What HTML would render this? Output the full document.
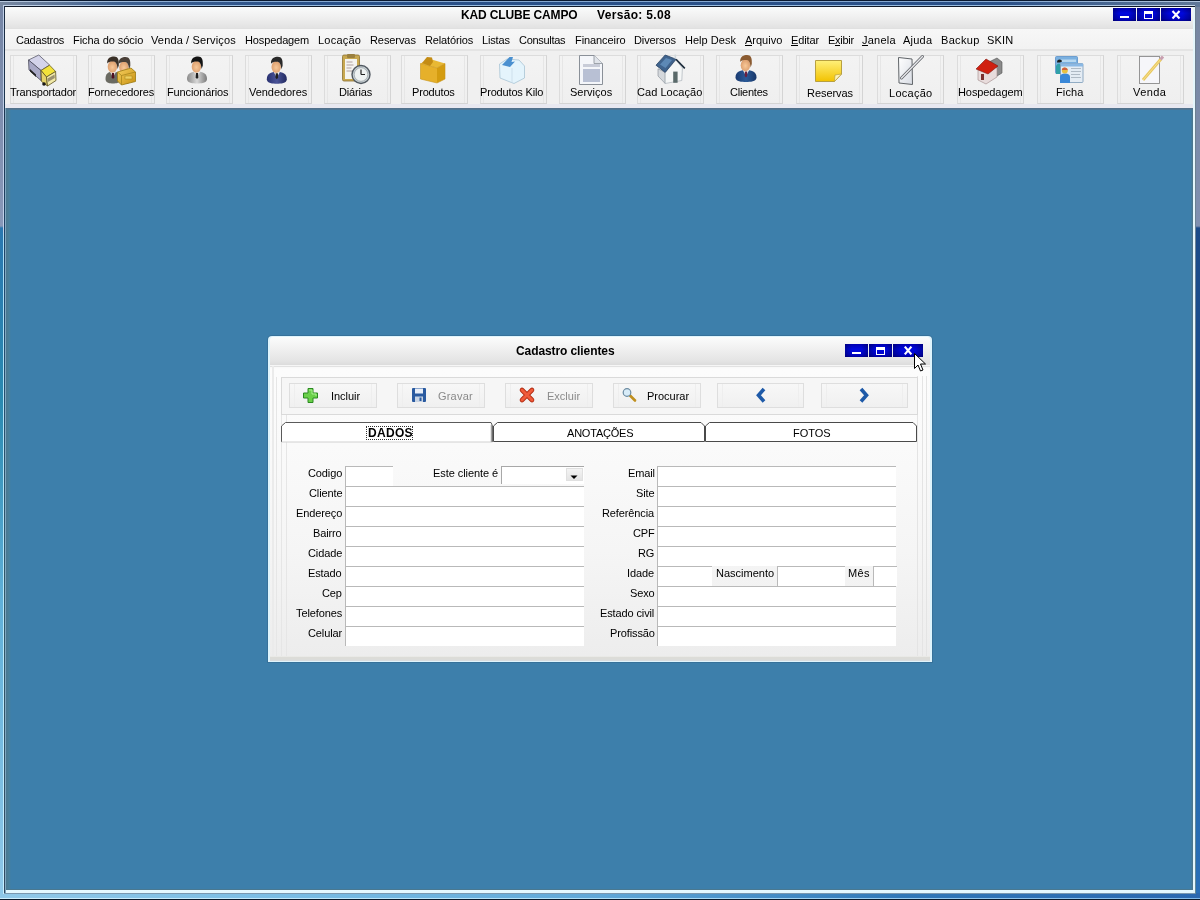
<!DOCTYPE html>
<html><head><meta charset="utf-8">
<style>
*{box-sizing:border-box;margin:0;padding:0}
html,body{width:1200px;height:900px;overflow:hidden;background:#3d7fab}
body{position:relative;font-family:"Liberation Sans",sans-serif;font-size:11px;color:#000}
.a{position:absolute}
.t{position:absolute;white-space:nowrap;will-change:transform}
u{text-decoration:none;border-bottom:1px solid #000;display:inline-block;line-height:10px}
.tb{position:absolute;top:55px;width:67px;height:49px;border:1px solid #dcdcdc;border-right-color:#d4d4d4;border-bottom-color:#d4d4d4;background:linear-gradient(180deg,#f3f3f3,#efefef)}
.tb:before{content:"";position:absolute;left:2px;top:0;width:1px;bottom:0;background:#e6e6e6}
.tb:after{content:"";position:absolute;right:2px;top:0;width:1px;bottom:0;background:#e6e6e6}
.ic{position:absolute;top:55px;width:32px;height:32px}
.db{position:absolute;top:383px;height:25px;border:1px solid #dedede;background:linear-gradient(180deg,#f7f7f7,#f0f0f0)}
.db:before{content:"";position:absolute;left:4px;top:0;width:1px;bottom:0;background:#eeeeee}
.db:after{content:"";position:absolute;right:4px;top:0;width:1px;bottom:0;background:#eeeeee}
.fld{position:absolute;background:#fff;border-top:1px solid #b9b9b9;border-left:1px solid #b9b9b9;height:20px}
.wb{position:absolute;background:linear-gradient(90deg,rgba(0,0,40,.35),rgba(0,0,0,0) 30%,rgba(0,0,0,0) 70%,rgba(0,0,40,.35)),linear-gradient(180deg,#0000b0,#0008e0 40%,#0004c8 80%,#00009a)}
</style></head><body>
<div class="a" style="left:0;top:0;width:1200px;height:900px;background:#3d7fab"></div>
<div class="a" style="left:0;top:0;width:4px;height:900px;background:linear-gradient(180deg,#7585a5 0,#8898b8 226px,#2a78b0 228px,#2a8ab0 400px,#60b0d8 600px,#90c8e8 900px)"></div>
<div class="a" style="left:1195px;top:0;width:5px;height:900px;background:linear-gradient(180deg,#7585a0 0,#8090b0 226px,#1a4a88 228px,#1a5090 400px,#2060a0 600px,#2a70b8 900px)"></div>
<div class="a" style="left:0;top:893px;width:1200px;height:7px;background:linear-gradient(90deg,#90c8e8 0,#78bce4 300px,#60a8d8 600px,#3078b8 900px,#2a68b0 1200px)"></div>
<div class="a" style="left:0;top:0;width:1200px;height:7px;background:linear-gradient(90deg,#7888a0 0,#3e6090 120px,#2a5088 300px,#2a5088 1000px,#607898 1200px)"></div>
<div class="a" style="left:0;top:0;width:1200px;height:1px;background:#0b1a30"></div>
<div class="a" style="left:0;top:1px;width:1200px;height:1px;background:linear-gradient(90deg,#b8c8dc,#86a8d0 200px,#86a8d0 1000px,#b0c4dc)"></div>
<div class="a" style="left:3px;top:5px;width:1192px;height:1px;background:linear-gradient(90deg,#c4d4e8,#98bce0 200px,#98bce0 1000px,#c4d4e8)"></div>
<div class="a" style="left:3px;top:5px;width:1px;height:889px;background:linear-gradient(180deg,#c0d0e8,#c0d0e8 226px,#a8dcf4 232px,#b8e8f8 600px,#c8f0ff)"></div>
<div class="a" style="left:4px;top:6px;width:1191px;height:1px;background:#101828"></div>
<div class="a" style="left:4px;top:6px;width:1px;height:888px;background:linear-gradient(180deg,#1a2a40,#1f4a70 300px,#305868 600px,#304860)"></div>
<div class="a" style="left:1195px;top:6px;width:1px;height:888px;background:linear-gradient(180deg,#708090,#608898)"></div>
<div class="a" style="left:0;top:898px;width:1200px;height:1px;background:linear-gradient(90deg,#d0f0ff,#b0e0f8 600px,#80b8e8)"></div>
<div class="a" style="left:0;top:899px;width:1200px;height:1px;background:#0a1a2a"></div>
<div class="a" style="left:4px;top:893px;width:1191px;height:1px;background:#7a98b0"></div>
<div class="a" style="left:5px;top:7px;width:1190px;height:101px;background:#f0f0f0"></div>
<div class="a" style="left:5px;top:7px;width:1188px;height:22px;background:linear-gradient(180deg,#fafbfb 0,#f0f0f0 10px,#e2e2e2 21px,#dedede 22px)"></div>
<div class="a" style="left:5px;top:29px;width:1188px;height:20px;background:linear-gradient(180deg,#f7f7f7,#f2f2f2)"></div>
<div class="a" style="left:5px;top:49px;width:1188px;height:2px;background:#e4e4e4"></div>
<div class="a" style="left:5px;top:51px;width:1188px;height:53px;background:#f0f0f0"></div>
<div class="a" style="left:5px;top:104px;width:1188px;height:4px;background:#e8e8f0"></div>
<div class="a" style="left:1193px;top:7px;width:2px;height:886px;background:#e4f6fc"></div>
<div class="wb" style="left:1113px;top:8px;width:23px;height:13px"></div>
<div class="wb" style="left:1137px;top:8px;width:23px;height:13px"></div>
<div class="wb" style="left:1161px;top:8px;width:30px;height:13px"></div>
<div class="a" style="left:1120px;top:16px;width:9px;height:2px;background:#fff"></div>
<div class="a" style="left:1144px;top:11px;width:9px;height:8px;border:1px solid #fff;border-top-width:3px"></div>
<svg class="a" style="left:1170px;top:10px" width="12" height="10"><path d="M2.5 1 L9.5 8.5 M9.5 1 L2.5 8.5" stroke="#fff" stroke-width="2.1"/></svg>
<div class="tb" style="left:10px"></div>
<div class="tb" style="left:88px"></div>
<div class="tb" style="left:166px"></div>
<div class="tb" style="left:245px"></div>
<div class="tb" style="left:324px"></div>
<div class="tb" style="left:401px"></div>
<div class="tb" style="left:480px"></div>
<div class="tb" style="left:559px"></div>
<div class="tb" style="left:637px"></div>
<div class="tb" style="left:716px"></div>
<div class="tb" style="left:796px"></div>
<div class="tb" style="left:877px"></div>
<div class="tb" style="left:957px"></div>
<div class="tb" style="left:1037px"></div>
<div class="tb" style="left:1117px"></div>
<div class="a" style="left:5px;top:108px;width:1188px;height:785px;background:#e4f8ff"></div>
<div class="a" style="left:5px;top:108px;width:1px;height:785px;background:#80a8c0"></div>
<div class="a" style="left:6px;top:108px;width:1187px;height:782px;background:linear-gradient(90deg,#4a7890 0,#48809c 3px,#3d7fab 5px,#3d7fab 1185px,#4a7890 1186px)"></div>
<div class="a" style="left:6px;top:108px;width:1187px;height:2px;background:linear-gradient(180deg,#566f88,#4a7898)"></div>
<div class="a" style="left:6px;top:889px;width:1187px;height:1px;background:#4a7890"></div>
<div class="a" style="left:267px;top:335px;width:666px;height:328px;border-radius:5px 5px 0 0;background:#2a5a7a;opacity:.35"></div>
<div class="a" style="left:268px;top:336px;width:664px;height:326px;border-radius:4px 4px 0 0;background:#dff4fc"></div>
<div class="a" style="left:270px;top:337px;width:660px;height:28px;border-radius:3px 3px 0 0;background:linear-gradient(180deg,#fbfcfc 0,#f2f2f2 10px,#e4e4e4 24px,#dcdcdc 28px)"></div>
<div class="a" style="left:270px;top:365px;width:660px;height:292px;background:linear-gradient(180deg,#f6f6f6 0,#fcfcfc 3px,#fafafa 80px,#f5f5f5 185px,#ededed 290px);border-top:1px solid #f6f6f6;box-shadow:inset 0 1px 0 #e2e2e2"></div>
<div class="a" style="left:270px;top:656px;width:660px;height:5px;background:linear-gradient(180deg,#f0f0ee,#dcdcd8 1.5px,#dcdcd8 3px,#d8dce0)"></div>
<div class="a" style="left:272px;top:366px;width:2px;height:290px;background:#ebebeb"></div>
<div class="a" style="left:276px;top:377px;width:1px;height:279px;background:#e6e6e6"></div>
<div class="a" style="left:281px;top:377px;width:1px;height:279px;background:#e6e6e6"></div>
<div class="a" style="left:286px;top:377px;width:1px;height:279px;background:#e6e6e6"></div>
<div class="a" style="left:917px;top:376px;width:1px;height:280px;background:#e4e4e4"></div>
<div class="a" style="left:922px;top:376px;width:1px;height:280px;background:#e4e4e4"></div>
<div class="a" style="left:926px;top:376px;width:1px;height:280px;background:#e4e4e4"></div>
<div class="wb" style="left:845px;top:344px;width:23px;height:13px"></div>
<div class="wb" style="left:869px;top:344px;width:23px;height:13px"></div>
<div class="wb" style="left:893px;top:344px;width:30px;height:13px"></div>
<div class="a" style="left:852px;top:352px;width:9px;height:2px;background:#fff"></div>
<div class="a" style="left:876px;top:347px;width:9px;height:8px;border:1px solid #fff;border-top-width:3px"></div>
<svg class="a" style="left:902px;top:345px" width="12" height="11"><path d="M2.8 1.6 L9.4 9.4 M9.4 1.6 L2.8 9.4" stroke="#fff" stroke-width="2.2"/></svg>
<div class="a" style="left:281px;top:377px;width:637px;height:38px;border:1px solid #dadada;background:#f6f6f6"></div>
<div class="db" style="left:289px;width:88px"></div>
<div class="db" style="left:397px;width:88px"></div>
<div class="db" style="left:505px;width:88px"></div>
<div class="db" style="left:613px;width:88px"></div>
<div class="db" style="left:717px;width:87px"></div>
<div class="db" style="left:821px;width:87px"></div>
<svg class="a" style="left:280px;top:421px" width="640" height="24"><path d="M1.5 21 L1.5 5 L5.5 1.5 L211 1.5 L212.5 5 L212.5 21" fill="#fff" stroke="#5a5a5a" stroke-width="1"/><path d="M213.5 20.5 L213.5 5 L217.5 1.5 L421 1.5 L424.5 5 L424.5 20.5 Z" fill="#fff" stroke="#4a4a4a" stroke-width="1"/><path d="M425.5 20.5 L425.5 5 L429.5 1.5 L633 1.5 L636.5 5 L636.5 20.5 Z" fill="#fff" stroke="#4a4a4a" stroke-width="1"/><path d="M1.5 21 L212.5 21" stroke="#d0d0d0" stroke-width="1"/><path d="M211.5 4 L211.5 21" stroke="#a0a0a0" stroke-width="1.5"/></svg>
<div class="a" style="left:366px;top:426px;width:47px;height:14px;border:1px dotted #333"></div>
<div class="fld" style="left:345px;top:466px;width:48px"></div>
<div class="fld" style="left:657px;top:466px;width:239px"></div>
<div class="fld" style="left:345px;top:486px;width:239px"></div>
<div class="fld" style="left:657px;top:486px;width:239px"></div>
<div class="fld" style="left:345px;top:506px;width:239px"></div>
<div class="fld" style="left:657px;top:506px;width:239px"></div>
<div class="fld" style="left:345px;top:526px;width:239px"></div>
<div class="fld" style="left:657px;top:526px;width:239px"></div>
<div class="fld" style="left:345px;top:546px;width:239px"></div>
<div class="fld" style="left:657px;top:546px;width:239px"></div>
<div class="fld" style="left:345px;top:566px;width:239px"></div>
<div class="fld" style="left:657px;top:566px;width:55px"></div>
<div class="fld" style="left:777px;top:566px;width:68px"></div>
<div class="fld" style="left:873px;top:566px;width:24px"></div>
<div class="fld" style="left:345px;top:586px;width:239px"></div>
<div class="fld" style="left:657px;top:586px;width:239px"></div>
<div class="fld" style="left:345px;top:606px;width:239px"></div>
<div class="fld" style="left:657px;top:606px;width:239px"></div>
<div class="fld" style="left:345px;top:626px;width:239px"></div>
<div class="fld" style="left:657px;top:626px;width:239px"></div>
<div class="a" style="left:501px;top:466px;width:83px;height:18px;background:#fff;border-top:1px solid #a8a8a8;border-left:1px solid #a8a8a8"></div>
<div class="a" style="left:566px;top:468px;width:17px;height:13px;background:linear-gradient(180deg,#f4f4f4,#e4e4e4);border:1px solid #e0e0e0"></div>
<svg class="a" style="left:570px;top:475px" width="9" height="5"><path d="M0.5 0.5 L7.5 0.5 L4 4 Z" fill="#000"/></svg>
<svg class="a" style="left:0;top:0" width="1200" height="110" viewBox="0 0 1200 110">
<defs><linearGradient id="gy" x1="0" y1="0" x2="0" y2="1"><stop offset="0" stop-color="#fff07a"/><stop offset="1" stop-color="#f2c200"/></linearGradient><linearGradient id="gold" x1="0" y1="0" x2="1" y2="1"><stop offset="0" stop-color="#f6d060"/><stop offset="1" stop-color="#c89010"/></linearGradient><linearGradient id="grey" x1="0" y1="0" x2="1" y2="0"><stop offset="0" stop-color="#8a8a8a"/><stop offset=".5" stop-color="#d8d8d8"/><stop offset="1" stop-color="#7a7a7a"/></linearGradient><linearGradient id="navy" x1="0" y1="0" x2="1" y2="0"><stop offset="0" stop-color="#283070"/><stop offset=".5" stop-color="#4a5498"/><stop offset="1" stop-color="#222a60"/></linearGradient><linearGradient id="blu" x1="0" y1="0" x2="1" y2="0"><stop offset="0" stop-color="#1a3a70"/><stop offset=".5" stop-color="#2a5a98"/><stop offset="1" stop-color="#183668"/></linearGradient><radialGradient id="skin" cx=".5" cy=".55" r=".6"><stop offset="0" stop-color="#f8c898"/><stop offset="1" stop-color="#d89868"/></radialGradient><linearGradient id="paper" x1="0" y1="0" x2="1" y2="1"><stop offset="0" stop-color="#ffffff"/><stop offset="1" stop-color="#d8dce4"/></linearGradient></defs>
<g stroke-linejoin="round"><path d="M28.5 60 L38.8 55 L49.6 65 L41 70.5 Z" fill="#d4d4ea" stroke="#5a5a6a" stroke-width=".8"/><path d="M28.5 60 L41 70.5 L41 80.5 L29 70 Z" fill="#a9a9c6" stroke="#4a4a5a" stroke-width=".8"/><path d="M30 69 L36 74.5 L36 77 L30 71.5 Z" fill="#202020"/><path d="M41 70.5 L49.6 65.2 L55.6 71.5 L46.5 77 Z" fill="#f2e23a" stroke="#6a6020" stroke-width=".8"/><path d="M41 70.5 L46.5 77 L47.5 86 L41.5 81.5 Z" fill="#e6d36a" stroke="#5a5020" stroke-width=".8"/><path d="M46.5 77 L55.6 71.5 L56 80.5 L47.5 86 Z" fill="#f2eaa8" stroke="#5a5020" stroke-width=".8"/><path d="M47.5 78.5 L54.5 74.5 L54.8 78 L47.8 82 Z" fill="#9a9070"/><circle cx="44" cy="84" r="1.8" fill="#181818"/></g>
<path d="M105.5 79.0 C105.5 73.5 108.5 71.5 113 71.5 C117.5 71.5 120.5 73.5 120.5 79.0 C120.5 83.0 116.0 83.5 113 83.5 C110.0 83.5 105.5 83.0 105.5 79.0 Z" fill="#6a6a62"/><path d="M109.8 71.5 L113 77.5 L116.2 71.5 Z" fill="#eeeeee"/><path d="M111.9 73.0 L114.1 73.0 L114.3 77.5 L113 79.0 L111.7 77.5 Z" fill="#501020"/><ellipse cx="112.4" cy="66.7" rx="4.7" ry="6" fill="url(#skin)"/><path d="M107.2 63.5 C106.8 57.5 111 56.5 114 56.5 C118 56.5 119.2 59.5 118.8 65.5 L117.6 69.0 C117.2 64.0 116 61.5 113 61.5 C110 61.5 108.4 62.1 107.2 63.5 Z" fill="#3a3028"/>
<path d="M118.5 79.5 C118.5 74 120.9 72 124.5 72 C128.1 72 130.5 74 130.5 79.5 C130.5 83.5 126.9 84 124.5 84 C122.1 84 118.5 83.5 118.5 79.5 Z" fill="#7a7a6a"/><path d="M121.3 72 L124.5 78 L127.7 72 Z" fill="#eeeeee"/><path d="M123.4 73.5 L125.6 73.5 L125.8 78 L124.5 79.5 L123.2 78 Z" fill="#802030"/><ellipse cx="123.9" cy="67.2" rx="4.7" ry="6" fill="url(#skin)"/><path d="M118.7 64 C118.3 58 122.5 57 125.5 57 C129.5 57 130.7 60 130.3 66 L129.1 69.5 C128.7 64.5 127.5 62 124.5 62 C121.5 62 119.9 62.6 118.7 64 Z" fill="#4a4038"/>
<path d="M117.5 72 L131 68 L135.5 72 L135.5 81.5 L121.5 85 L117.5 81 Z" fill="url(#gold)" stroke="#9a7a10" stroke-width=".8"/><path d="M117.5 72 L121.5 75.5 L135.5 72 M121.5 75.5 L121.5 85" fill="none" stroke="#a08018" stroke-width=".7"/><rect x="125" y="76" width="7" height="3" fill="#f0d060" stroke="#a08018" stroke-width=".5"/>
<path d="M187.0 79.0 C187.0 73.5 191.0 71.5 197 71.5 C203.0 71.5 207.0 73.5 207.0 79.0 C207.0 83.0 201.0 83.5 197 83.5 C193.0 83.5 187.0 83.0 187.0 79.0 Z" fill="url(#grey)"/><path d="M193.8 71.5 L197 77.5 L200.2 71.5 Z" fill="#eeeeee"/><path d="M195.9 73.0 L198.1 73.0 L198.3 77.5 L197 79.0 L195.7 77.5 Z" fill="#202020"/><ellipse cx="196.4" cy="66.7" rx="4.7" ry="6" fill="url(#skin)"/><path d="M191.2 63.5 C190.8 57.5 195 56.5 198 56.5 C202 56.5 203.2 59.5 202.8 65.5 L201.6 69.0 C201.2 64.0 200 61.5 197 61.5 C194 61.5 192.4 62.1 191.2 63.5 Z" fill="#151515"/>
<path d="M266.8 79.3 C266.8 73.8 270.8 71.8 276.8 71.8 C282.8 71.8 286.8 73.8 286.8 79.3 C286.8 83.3 280.8 83.8 276.8 83.8 C272.8 83.8 266.8 83.3 266.8 79.3 Z" fill="url(#navy)"/><path d="M273.6 71.8 L276.8 77.8 L280.0 71.8 Z" fill="#eeeeee"/><path d="M275.7 73.3 L277.90000000000003 73.3 L278.1 77.8 L276.8 79.3 L275.5 77.8 Z" fill="#202020"/><ellipse cx="276.2" cy="67.0" rx="4.7" ry="6" fill="url(#skin)"/><path d="M271.0 63.8 C270.6 57.8 274.8 56.8 277.8 56.8 C281.8 56.8 283.0 59.8 282.6 65.8 L281.40000000000003 69.3 C281.0 64.3 279.8 61.8 276.8 61.8 C273.8 61.8 272.2 62.4 271.0 63.8 Z" fill="#2a2a2a"/>
<rect x="342.5" y="55" width="17" height="26" rx="1.5" fill="#c8a850" stroke="#8a7030" stroke-width=".8"/><rect x="345" y="59" width="12" height="20" fill="#f4f4f0"/><path d="M346.5 62 h6 M346.5 65 h7 M346.5 68 h5 M346.5 71 h6" stroke="#b0a0a0" stroke-width="1"/><rect x="347" y="54" width="8" height="4" rx="1" fill="#9a8040"/><circle cx="361" cy="74.5" r="9" fill="#c8d0d4" stroke="#505860" stroke-width="1.4"/><circle cx="361" cy="74.5" r="6.8" fill="#eef2f2" stroke="#8a9498" stroke-width=".6"/><path d="M361 74.5 L361 69.5 M361 74.5 L365 74.5" stroke="#202020" stroke-width="1.2"/>
<path d="M420.5 63.5 L430 59 L445 63.5 L437 68 Z" fill="#e8b834"/><path d="M420.5 63.5 L437 68 L437 83 L420.5 79 Z" fill="#e6b02a"/><path d="M437 68 L445 63.5 L445 79 L437 83 Z" fill="#d49c10"/><path d="M420.5 63.5 L437 68 L445 63.5 L445 79 L437 83 L420.5 79 Z" fill="none" stroke="#c89418" stroke-width=".6"/><path d="M422 63 L427 57 L432 57.5 L433 62 L430 66 Z" fill="#c48c14"/>
<path d="M499.5 64 L507 59 L519 60 L524.5 66 L524.5 78 L514 83.5 L500 78 Z" fill="#e4f4fc" stroke="#a8c4d4" stroke-width=".8"/><path d="M512 68 L512 83" stroke="#c8dce8" stroke-width=".8"/><path d="M502 65 L509.5 57 L513 57 L511.5 62 L515 61.5 L510 67 Z" fill="#4a90d0"/>
<path d="M579.5 55.5 L594 55.5 L602.5 63.5 L602.5 84.5 L579.5 84.5 Z" fill="#f4f6fa" stroke="#8a9098" stroke-width="1"/><path d="M594 55.5 L594 63.5 L602.5 63.5" fill="#e0e4ea" stroke="#8a9098" stroke-width=".8"/><rect x="583" y="64" width="17" height="3" fill="#c8ccd8"/><rect x="583" y="69" width="17" height="13" fill="#b8c0d4"/>
<path d="M658 68.8 L665.2 72.4 L665.2 83.5 L658 76 Z" fill="#d4d8dc" stroke="#808890" stroke-width=".6"/><path d="M665.2 72.4 L676 60 L682.4 68 L681.8 80.5 L665.2 83.5 Z" fill="#f4f6f6" stroke="#a0a8b0" stroke-width=".6"/><path d="M656 65.2 L665.2 55 L676 59.2 L665.2 72.4 Z" fill="#40648e" stroke="#2a4466" stroke-width=".8"/><path d="M660 64.5 L666 58 L672 60 L665.5 68 Z" fill="#6a98c8" opacity=".7"/><path d="M676 59.2 L684.8 68.4" stroke="#1a2a3a" stroke-width="1.6"/><rect x="673.2" y="71.6" width="4.4" height="11.2" fill="#5a6a6a"/><rect x="674.5" y="54.5" width="1.6" height="4" fill="#d0d8dc"/>
<path d="M735.5 77.5 C735.5 72 739.7 70 746 70 C752.3 70 756.5 72 756.5 77.5 C756.5 81.5 750.2 82 746 82 C741.8 82 735.5 81.5 735.5 77.5 Z" fill="url(#blu)"/><path d="M742.8 70 L746 76 L749.2 70 Z" fill="#eeeeee"/><path d="M744.9 71.5 L747.1 71.5 L747.3 76 L746 77.5 L744.7 76 Z" fill="#6a2040"/><ellipse cx="745.4" cy="65.2" rx="4.7" ry="6" fill="url(#skin)"/><path d="M740.2 62 C739.8 56 744 55 747 55 C751 55 752.2 58 751.8 64 L750.6 67.5 C750.2 62.5 749 60 746 60 C743 60 741.4 60.6 740.2 62 Z" fill="#8a5a30"/>
<path d="M815.5 60.5 L841.5 60.5 L841.5 74 L834.5 81.5 L815.5 81.5 Z" fill="url(#gy)" stroke="#b8a040" stroke-width="1"/><path d="M834.5 81.5 L835 75 L841.5 74 Z" fill="#fff4b8" stroke="#b8a040" stroke-width=".7"/>
<path d="M898.5 57.5 L912 59 L912.5 84.5 L899 83 Z" fill="url(#paper)" stroke="#606468" stroke-width="1"/><path d="M901.5 78 L922.5 56.5" stroke="#606468" stroke-width="3" stroke-linecap="round"/><path d="M901.5 78 L922.5 56.5" stroke="#e8e8ec" stroke-width="1.4" stroke-linecap="round"/>
<path d="M987 63 L997 58 L1002 62 L1002 73 L992 79 L987 74 Z" fill="#8a8a8a" stroke="#505050" stroke-width=".6"/><path d="M978 70 L978 80 L986 84 L997 77 L997 68 L988 64 Z" fill="#e8dcdc" stroke="#a08888" stroke-width=".6"/><path d="M976 69 L986 59 L998 66 L988 74 Z" fill="#d02010" stroke="#801810" stroke-width=".6"/><rect x="981" y="74" width="3" height="6" fill="#7a3030"/>
<rect x="1055.5" y="56.5" width="22" height="17" rx="1" fill="#7ab0e0" stroke="#5a90c8" stroke-width=".8"/><rect x="1061" y="59.5" width="15" height="2.5" fill="#b8d8f0"/><path d="M1056 74 L1056 66 Q1057 63.5 1059 63.5 Q1061 63.5 1061 66 L1061 74 Z" fill="#30a0a8"/><path d="M1057 62.5 Q1057 59.5 1059.5 59.5 Q1062 59.5 1062 61.5 L1060 62.5 Z" fill="#1a2020"/><rect x="1060.5" y="63.5" width="22.5" height="19" rx="1" fill="#e4ecf4" stroke="#7a9ab8" stroke-width=".8"/><rect x="1061" y="63.5" width="22" height="3" fill="#8ab8e4"/><path d="M1071 68.5 h10 M1071 71.5 h10 M1071 74.5 h9 M1071 77.5 h10" stroke="#a8b4c0" stroke-width=".9"/><path d="M1060 83 L1060 77 Q1060 73.5 1065 73.5 Q1070 73.5 1070 77 L1070 83 Z" fill="#3a88d8"/><circle cx="1064.8" cy="70.5" r="3" fill="#e8c040"/><path d="M1061.8 70 Q1062 67.5 1064.8 67.5 Q1067.5 67.5 1067.8 70 Z" fill="#d06040"/>
<rect x="1139.5" y="56.5" width="20" height="27" fill="#f6f6fa" stroke="#8c8c8c" stroke-width=".9"/><path d="M1143 80 L1161 59" stroke="#e8c860" stroke-width="3" stroke-linecap="butt"/><path d="M1143 80 L1161 59" stroke="#f8e090" stroke-width="1"/><path d="M1160.5 59.5 L1163 56.5" stroke="#c8a0b0" stroke-width="3"/>
</svg>
<svg class="a" style="left:0;top:370px" width="1200" height="50" viewBox="0 370 1200 50">
<path d="M308 388.5 h5 v4.5 h4.5 v5 h-4.5 v4.5 h-5 v-4.5 h-4.5 v-5 h4.5 Z" fill="#6ad04a" stroke="#2a8a20" stroke-width="1"/><path d="M309 390 h3 v4 h4 v2" fill="none" stroke="#a8f090" stroke-width="1"/>
<rect x="412" y="388" width="14" height="14" rx="1" fill="#2a5aa0"/><rect x="415" y="388.5" width="8" height="5" fill="#e8eef8"/><rect x="415" y="396.5" width="8" height="5.5" fill="#c8d4e4"/><rect x="419.5" y="397.5" width="2" height="3.5" fill="#2a5aa0"/>
<path d="M522 390 L532 400 M532 390 L522 400" stroke="#b02a10" stroke-width="4.6" stroke-linecap="round"/><path d="M522 390 L532 400 M532 390 L522 400" stroke="#f05a3a" stroke-width="3" stroke-linecap="round"/>
<path d="M629 394.5 L635 400.5" stroke="#c09020" stroke-width="2.6" stroke-linecap="round"/><circle cx="627" cy="392.5" r="3.8" fill="#d8ecf8" stroke="#6a8aa0" stroke-width="1.2"/>
<path d="M764 389 L758.5 395.3 L764 401.5" fill="none" stroke="#1e5aa8" stroke-width="3.6" stroke-linejoin="miter" stroke-miterlimit="6"/><path d="M861 389 L866.5 395.3 L861 401.5" fill="none" stroke="#1e5aa8" stroke-width="3.6" stroke-linejoin="miter" stroke-miterlimit="6"/>
</svg>
<svg class="a" style="left:910.5px;top:351.2px" width="18" height="24" viewBox="0 0 18 24"><path d="M3.5 2.5 L3.5 17.5 L7 14 L9.5 20 L12 19 L9.5 13 L14.5 13 Z" fill="#fff" stroke="#000" stroke-width="1" stroke-linejoin="round"/></svg>
<div class="t" style="left:460.7px;top:8.0px;font-size:12px;line-height:14px;letter-spacing:-0.15px;font-weight:bold;">KAD CLUBE CAMPO</div>
<div class="t" style="left:596.8px;top:8.0px;font-size:12px;line-height:14px;letter-spacing:0.32px;font-weight:bold;">Versão: 5.08</div>
<div class="t" style="left:15.7px;top:33.5px;font-size:11px;line-height:13px;letter-spacing:-0.23px;">Cadastros</div>
<div class="t" style="left:72.5px;top:33.5px;font-size:11px;line-height:13px;letter-spacing:-0.05px;">Ficha do sócio</div>
<div class="t" style="left:151.2px;top:33.5px;font-size:11px;line-height:13px;letter-spacing:0.14px;">Venda / Serviços</div>
<div class="t" style="left:244.5px;top:33.5px;font-size:11px;line-height:13px;letter-spacing:-0.13px;">Hospedagem</div>
<div class="t" style="left:317.9px;top:33.5px;font-size:11px;line-height:13px;letter-spacing:0.22px;">Locação</div>
<div class="t" style="left:369.9px;top:33.5px;font-size:11px;line-height:13px;letter-spacing:-0.08px;">Reservas</div>
<div class="t" style="left:424.5px;top:33.5px;font-size:11px;line-height:13px;letter-spacing:-0.14px;">Relatórios</div>
<div class="t" style="left:481.9px;top:33.5px;font-size:11px;line-height:13px;letter-spacing:-0.17px;">Listas</div>
<div class="t" style="left:519.2px;top:33.5px;font-size:11px;line-height:13px;letter-spacing:-0.29px;">Consultas</div>
<div class="t" style="left:575.2px;top:33.5px;font-size:11px;line-height:13px;letter-spacing:-0.08px;">Financeiro</div>
<div class="t" style="left:633.9px;top:33.5px;font-size:11px;line-height:13px;letter-spacing:-0.13px;">Diversos</div>
<div class="t" style="left:684.5px;top:33.5px;font-size:11px;line-height:13px;letter-spacing:0.03px;">Help Desk</div>
<div class="t" style="left:744.5px;top:33.5px;font-size:11px;line-height:13px;letter-spacing:-0.00px;"><u>A</u>rquivo</div>
<div class="t" style="left:790.7px;top:33.5px;font-size:11px;line-height:13px;letter-spacing:-0.13px;"><u>E</u>ditar</div>
<div class="t" style="left:827.7px;top:33.5px;font-size:11px;line-height:13px;letter-spacing:-0.28px;">E<u>x</u>ibir</div>
<div class="t" style="left:861.9px;top:33.5px;font-size:11px;line-height:13px;letter-spacing:0.24px;"><u>J</u>anela</div>
<div class="t" style="left:903.2px;top:33.5px;font-size:11px;line-height:13px;letter-spacing:0.24px;">Ajuda</div>
<div class="t" style="left:940.5px;top:33.5px;font-size:11px;line-height:13px;letter-spacing:0.32px;">Backup</div>
<div class="t" style="left:987.2px;top:33.5px;font-size:11px;line-height:13px;letter-spacing:0.14px;">SKIN</div>
<div class="t" style="left:9.5px;top:85.5px;font-size:11px;line-height:13px;letter-spacing:-0.20px;">Transportador</div>
<div class="t" style="left:87.5px;top:85.5px;font-size:11px;line-height:13px;letter-spacing:-0.14px;">Fornecedores</div>
<div class="t" style="left:167.2px;top:85.5px;font-size:11px;line-height:13px;letter-spacing:-0.13px;">Funcionários</div>
<div class="t" style="left:248.5px;top:85.5px;font-size:11px;line-height:13px;letter-spacing:-0.05px;">Vendedores</div>
<div class="t" style="left:338.7px;top:85.5px;font-size:11px;line-height:13px;letter-spacing:-0.15px;">Diárias</div>
<div class="t" style="left:411.7px;top:85.5px;font-size:11px;line-height:13px;letter-spacing:-0.17px;">Produtos</div>
<div class="t" style="left:480.4px;top:85.5px;font-size:11px;line-height:13px;letter-spacing:-0.17px;">Produtos Kilo</div>
<div class="t" style="left:569.9px;top:85.5px;font-size:11px;line-height:13px;letter-spacing:0.00px;">Serviços</div>
<div class="t" style="left:636.7px;top:85.5px;font-size:11px;line-height:13px;letter-spacing:0.05px;">Cad Locação</div>
<div class="t" style="left:729.7px;top:85.5px;font-size:11px;line-height:13px;letter-spacing:-0.24px;">Clientes</div>
<div class="t" style="left:806.7px;top:86.5px;font-size:11px;line-height:13px;letter-spacing:-0.05px;">Reservas</div>
<div class="t" style="left:888.9px;top:86.5px;font-size:11px;line-height:13px;letter-spacing:0.27px;">Locação</div>
<div class="t" style="left:957.5px;top:85.5px;font-size:11px;line-height:13px;letter-spacing:-0.09px;">Hospedagem</div>
<div class="t" style="left:1055.5px;top:85.5px;font-size:11px;line-height:13px;letter-spacing:0.11px;">Ficha</div>
<div class="t" style="left:1133.0px;top:85.5px;font-size:11px;line-height:13px;letter-spacing:0.41px;">Venda</div>
<div class="t" style="left:516.0px;top:344.0px;font-size:12px;line-height:14px;letter-spacing:-0.09px;font-weight:bold;">Cadastro clientes</div>
<div class="t" style="left:330.7px;top:389.5px;font-size:11px;line-height:13px;letter-spacing:-0.04px;">Incluir</div>
<div class="t" style="left:438.2px;top:389.5px;font-size:11px;line-height:13px;letter-spacing:0.20px;color:#8a8a8a;">Gravar</div>
<div class="t" style="left:546.7px;top:389.5px;font-size:11px;line-height:13px;letter-spacing:0.01px;color:#8a8a8a;">Excluir</div>
<div class="t" style="left:646.7px;top:389.5px;font-size:11px;line-height:13px;letter-spacing:-0.01px;">Procurar</div>
<div class="t" style="left:367.7px;top:426.0px;font-size:12px;line-height:14px;letter-spacing:0.31px;font-weight:bold;">DADOS</div>
<div class="t" style="left:566.7px;top:426.5px;font-size:11px;line-height:13px;letter-spacing:-0.21px;">ANOTAÇÕES</div>
<div class="t" style="left:792.7px;top:426.5px;font-size:11px;line-height:13px;letter-spacing:-0.03px;">FOTOS</div>
<div class="t" style="left:307.7px;top:467.0px;font-size:11px;line-height:13px;letter-spacing:-0.12px;">Codigo</div>
<div class="t" style="left:308.5px;top:487.0px;font-size:11px;line-height:13px;letter-spacing:-0.12px;">Cliente</div>
<div class="t" style="left:295.7px;top:507.0px;font-size:11px;line-height:13px;letter-spacing:-0.12px;">Endereço</div>
<div class="t" style="left:313.3px;top:527.0px;font-size:11px;line-height:13px;letter-spacing:-0.12px;">Bairro</div>
<div class="t" style="left:307.7px;top:547.0px;font-size:11px;line-height:13px;letter-spacing:-0.12px;">Cidade</div>
<div class="t" style="left:308.4px;top:567.0px;font-size:11px;line-height:13px;letter-spacing:-0.12px;">Estado</div>
<div class="t" style="left:322.1px;top:587.0px;font-size:11px;line-height:13px;letter-spacing:-0.12px;">Cep</div>
<div class="t" style="left:295.9px;top:607.0px;font-size:11px;line-height:13px;letter-spacing:-0.12px;">Telefones</div>
<div class="t" style="left:307.9px;top:627.0px;font-size:11px;line-height:13px;letter-spacing:-0.12px;">Celular</div>
<div class="t" style="left:627.5px;top:467.0px;font-size:11px;line-height:13px;letter-spacing:-0.12px;">Email</div>
<div class="t" style="left:635.9px;top:487.0px;font-size:11px;line-height:13px;letter-spacing:-0.12px;">Site</div>
<div class="t" style="left:602.4px;top:507.0px;font-size:11px;line-height:13px;letter-spacing:-0.12px;">Referência</div>
<div class="t" style="left:632.7px;top:527.0px;font-size:11px;line-height:13px;letter-spacing:-0.12px;">CPF</div>
<div class="t" style="left:638.1px;top:547.0px;font-size:11px;line-height:13px;letter-spacing:-0.12px;">RG</div>
<div class="t" style="left:627.4px;top:567.0px;font-size:11px;line-height:13px;letter-spacing:-0.12px;">Idade</div>
<div class="t" style="left:629.8px;top:587.0px;font-size:11px;line-height:13px;letter-spacing:-0.12px;">Sexo</div>
<div class="t" style="left:600.2px;top:607.0px;font-size:11px;line-height:13px;letter-spacing:-0.12px;">Estado civil</div>
<div class="t" style="left:609.6px;top:627.0px;font-size:11px;line-height:13px;letter-spacing:-0.12px;">Profissão</div>
<div class="t" style="left:432.7px;top:467.0px;font-size:11px;line-height:13px;letter-spacing:-0.07px;">Este cliente é</div>
<div class="t" style="left:716.2px;top:567.0px;font-size:11px;line-height:13px;letter-spacing:0.00px;">Nascimento</div>
<div class="t" style="left:848.2px;top:567.0px;font-size:11px;line-height:13px;letter-spacing:0.41px;">Mês</div>
</body></html>
